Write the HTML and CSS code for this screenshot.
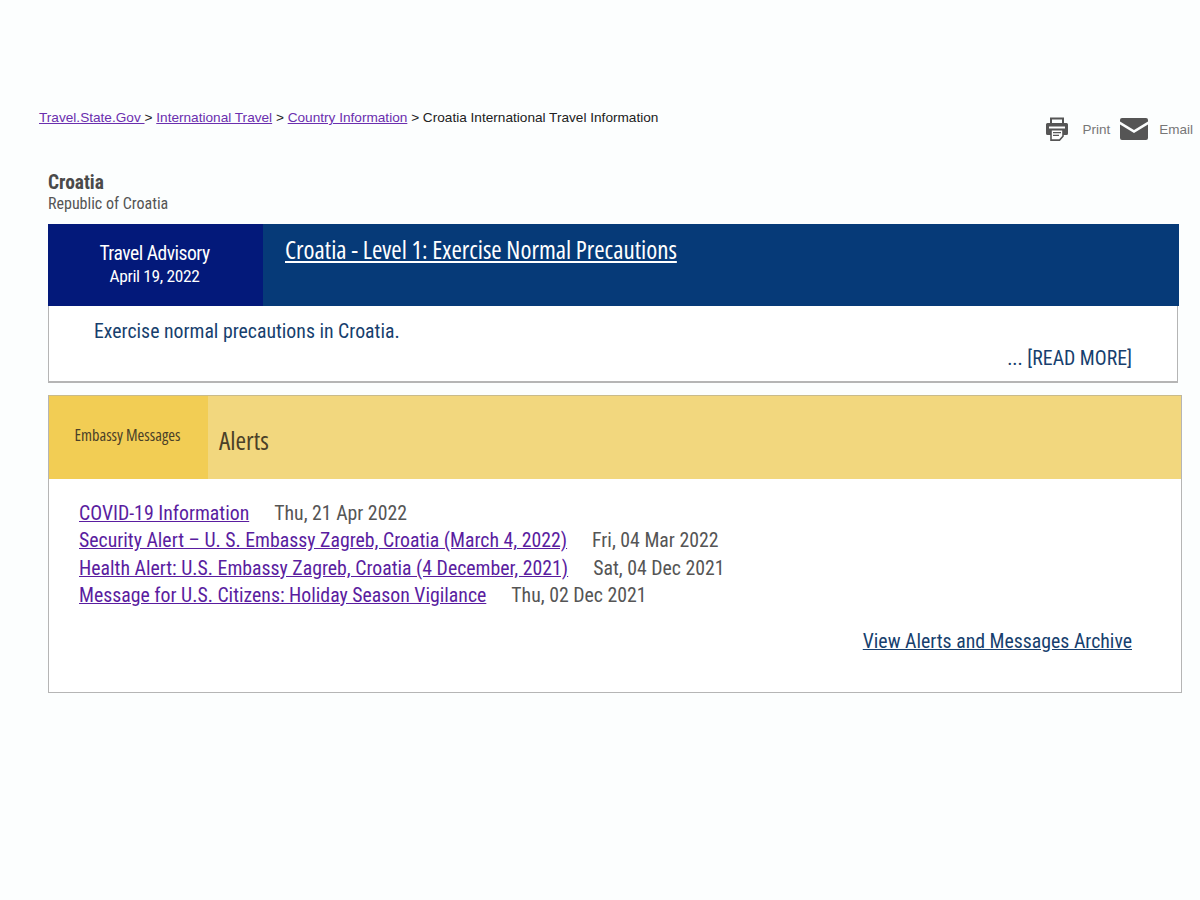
FILE: index.html
```html
<!DOCTYPE html>
<html lang="en">
<head>
<meta charset="utf-8">
<title>Croatia International Travel Information</title>
<link rel="stylesheet" href="styles.css">
</head>
<body>
<div class="topbar">
  <nav class="crumbs">
    <a href="#">Travel.State.Gov </a> &gt; <a href="#">International Travel</a> &gt; <a href="#">Country Information</a> &gt; Croatia International Travel Information
  </nav>
  <div class="actions">
    <svg class="icon-print" width="24" height="24" viewBox="0 0 24 24"><path fill="#555" d="M5 0.500h14V7H17V2.500H7V7H5z"/><path fill="#555" d="M2.500 6h19A1.500 1.500 0 0 1 23 7.500v9a1.500 1.500 0 0 1-1.500 1.500H2.500A1.500 1.500 0 0 1 1 16.500v-9A1.500 1.500 0 0 1 2.500 6z"/><path fill="#fff" d="M4 9.500h16v2H4z"/><path fill="#fff" stroke="#555" stroke-width="1.600" d="M6 12.800h12v6.500l-3.500 3.800H6z"/><path fill="#555" d="M8 15h8v1.200H8zM8 17.800h6v1.200H8z"/></svg>
    <span class="action-label print-label">Print</span>
    <svg class="icon-mail" width="28" height="24" viewBox="0 0 28 24"><path fill="#555" d="M2 1h24a2 2 0 0 1 2 2v1.500L14 13 0 4.500V3a2 2 0 0 1 2-2z"/><path fill="#555" d="M0 7.500l14 8.500 14-8.500V21a2 2 0 0 1-2 2H2a2 2 0 0 1-2-2z"/></svg>
    <span class="action-label">Email</span>
  </div>
</div>

<main class="content">
  <h1 class="country">Croatia</h1>
  <p class="official">Republic of Croatia</p>

  <section class="advisory">
    <div class="advisory-head">
      <div class="advisory-tag"><span class="tag-title">Travel Advisory</span><span>April 19, 2022</span></div>
      <div class="advisory-title"><a href="#">Croatia - Level 1: Exercise Normal Precautions</a></div>
    </div>
    <div class="advisory-body">
      <p class="advisory-text">Exercise normal precautions in Croatia.</p>
      <p class="read-more">... [READ MORE]</p>
    </div>
  </section>

  <section class="alerts">
    <div class="alerts-head">
      <div class="alerts-tag">Embassy Messages</div>
      <h2 class="alerts-title">Alerts</h2>
    </div>
    <div class="alerts-body">
      <ul class="alert-list">
        <li><a href="#">COVID-19 Information</a><span class="date">Thu, 21 Apr 2022</span></li>
        <li><a href="#">Security Alert – U. S. Embassy Zagreb, Croatia (March 4, 2022)</a><span class="date">Fri, 04 Mar 2022</span></li>
        <li><a href="#">Health Alert: U.S. Embassy Zagreb, Croatia (4 December, 2021)</a><span class="date">Sat, 04 Dec 2021</span></li>
        <li><a href="#">Message for U.S. Citizens: Holiday Season Vigilance</a><span class="date">Thu, 02 Dec 2021</span></li>
      </ul>
      <p class="archive"><a href="#">View Alerts and Messages Archive</a></p>
    </div>
  </section>
</main>
</body>
</html>
```
FILE: styles.css
```css
* { box-sizing: border-box; }
html, body { margin: 0; padding: 0; }
body {
  background: #fcfefe;
  color: #4a4a4a;
  font-family: Roboto, "Liberation Sans", sans-serif;
  font-stretch: 75%;
  height: 900px;
  overflow: hidden;
}
.topbar {
  display: flex;
  justify-content: space-between;
  align-items: flex-start;
  padding: 109px 7px 0 39px;
  height: 172px;
}
.crumbs {
  font-family: "Liberation Sans", Arial, sans-serif;
  font-size: 13.64px;
  line-height: 17px;
  color: #222;
}
.crumbs a { color: #6b2fae; }
.actions {
  display: flex;
  align-items: center;
  margin-top: 8px;
}
.icon-print { margin-right: 13px; }
.print-label { margin-right: 10px; }
.icon-mail { margin-right: 11px; }
.action-label {
  font-family: "Liberation Sans", Arial, sans-serif;
  font-size: 13.5px;
  color: #777;
}
.content { padding: 0 18px 0 48px; }
.country {
  margin: 0;
  font-size: 19.4px;
  line-height: 22px;
  font-weight: 700;
  color: #4a4a4a;
}
.official {
  margin: 0 0 10px;
  font-size: 16px;
  line-height: 20px;
  color: #555;
}
.advisory { margin-right: 3px; }
.advisory-head {
  display: flex;
  height: 82px;
  background: #063a78;
  color: #fff;
  font-family: "Open Sans", Roboto, sans-serif;
}
.advisory-tag {
  width: 215px;
  background: #03197a;
  font-family: Roboto, sans-serif;
  display: flex;
  flex-direction: column;
  align-items: center;
  padding: 18px 2px 0 0;
  font-size: 17.4px;
  letter-spacing: -0.35px;
  line-height: 23px;
}
.tag-title {
  font-size: 19.6px;
  letter-spacing: -0.5px;
}
.advisory-title {
  padding: 10px 0 0 22px;
  font-size: 25px;
  line-height: 30px;
}
.advisory-title a { color: #fff; }
.advisory-body {
  height: 77px;
  margin-right: 1px;
  background: #fff;
  border: 1px solid #b5b5b5;
  border-top: 0;
  border-bottom-width: 2px;
  padding: 12px 45px 0 45px;
  color: #173f6e;
  font-size: 19.8px;
  line-height: 27px;
}
.advisory-text, .read-more { margin: 0; }
.read-more { text-align: right; }
.alerts {
  margin-top: 12px;
  border: 1px solid #b5b5b5;
  border-top-color: #c9bb8a;
  background: #fff;
}
.alerts-head {
  display: flex;
  height: 83px;
  background: #f2d77e;
  color: #4a4028;
  font-family: "Open Sans", Roboto, sans-serif;
}
.alerts-tag {
  width: 159px;
  background: #f2cd54;
  display: flex;
  align-items: center;
  justify-content: center;
  font-size: 16.3px;
  padding: 0 2px 5px 0;
}
.alerts-title {
  margin: 0;
  padding: 27px 0 0 11px;
  font-size: 25.5px;
  line-height: 34px;
  font-weight: 400;
}
.alerts-body {
  height: 213px;
  padding: 21px 49px 0 30px;
  font-size: 19.8px;
  line-height: 27.3px;
}
.alert-list { list-style: none; margin: 0; padding: 0; }
.alert-list a { color: #5a1da0; }
.date { margin-left: 25px; color: #555; }
.archive { margin: 19px 0 0; text-align: right; }
.archive a { color: #173f6e; }
```
